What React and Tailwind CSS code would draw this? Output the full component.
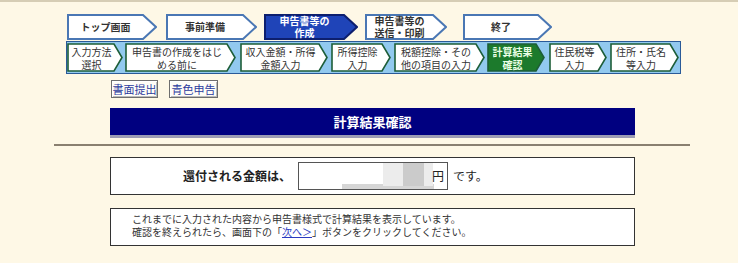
import React from "react";

const topSteps = [
  { lines: ["トップ画面"], w: 90, ml: 0 },
  { lines: ["事前準備"], w: 91, ml: 9 },
  { lines: ["申告書等の", "作成"], w: 94, ml: 7, active: true },
  { lines: ["申告書等の", "送信・印刷"], w: 82, ml: 7 },
  { lines: ["終了"], w: 89, ml: 16 },
];

const subSteps = [
  { lines: ["入力方法", "選択"], w: 56, ml: 0 },
  { lines: ["申告書の作成をはじ", "める前に"], w: 111, ml: 2 },
  { lines: ["収入金額・所得", "金額入力"], w: 88, ml: 4 },
  { lines: ["所得控除", "入力"], w: 60, ml: 3 },
  { lines: ["税額控除・その", "他の項目の入力"], w: 91, ml: 3 },
  { lines: ["計算結果", "確認"], w: 58, ml: 2, active: true },
  { lines: ["住民税等", "入力"], w: 58, ml: 4 },
  { lines: ["住所・氏名", "等入力"], w: 69, ml: 3 },
];

function TopStep({ lines, w, ml, active }) {
  const h = 26;
  const pts = `1,1 ${w - 14},1 ${w - 1},${h / 2} ${w - 14},${h - 1} 1,${h - 1}`;
  return (
    <div className="relative shrink-0" style={{ width: w, height: h, marginLeft: ml }}>
      <svg className="absolute inset-0" width={w} height={h}>
        <polygon
          points={pts}
          fill={active ? "#1f44b8" : "#ffffff"}
          stroke={active ? "#0d1f6e" : "#4a77b4"}
          strokeWidth="2"
        />
      </svg>
      <div
        className={`relative h-full flex flex-col items-center justify-center pr-[13px] text-[10px] leading-[12px] font-bold whitespace-nowrap ${
          active ? "text-white" : "text-[#333]"
        }`}
      >
        {lines.map((l) => (
          <span key={l}>{l}</span>
        ))}
      </div>
    </div>
  );
}

function SubStep({ lines, w, ml, active }) {
  const h = 29;
  const pts = `1,1 ${w - 9},1 ${w - 1},${h / 2} ${w - 9},${h - 1} 1,${h - 1}`;
  return (
    <div className="relative shrink-0" style={{ width: w, height: h, marginLeft: ml }}>
      <svg className="absolute inset-0" width={w} height={h}>
        <polygon
          points={pts}
          fill={active ? "#1c7a2c" : "#ffffff"}
          stroke="#1d5e38"
          strokeWidth="1.6"
        />
      </svg>
      <div
        className={`relative h-full flex flex-col items-center justify-center pr-[7px] text-[10px] leading-[13px] whitespace-nowrap ${
          active ? "text-[#eaffe6] font-bold" : "text-[#333]"
        }`}
      >
        {lines.map((l) => (
          <span key={l}>{l}</span>
        ))}
      </div>
    </div>
  );
}

export default function App() {
  return (
    <div className="w-[738px] h-[263px] overflow-hidden bg-[#fef8e6] border-t-2 border-[#d6cdb5] font-['Noto_Sans_CJK_JP','Liberation_Sans',sans-serif]">
      {/* main steps */}
      <div className="flex pl-[67px] pt-[12px] h-[39px]">
        {topSteps.map((s) => (
          <TopStep key={s.lines.join()} {...s} />
        ))}
      </div>

      {/* sub steps */}
      <div className="ml-[66px] w-[615px] h-[33px] bg-[#92c9ef] border border-[#2a5a98] flex items-center">
        {subSteps.map((s) => (
          <SubStep key={s.lines.join()} {...s} />
        ))}
      </div>

      {/* buttons */}
      <div className="flex ml-[111px] mt-[6px] gap-[11px]">
        <div className="h-[18px] w-[47px] flex items-center justify-center whitespace-nowrap border border-[#6e6e6e] bg-[#fffdf6] shadow-[inset_1px_1px_0_#ffffff,inset_-1px_-1px_0_#bbbbbb] text-[11px] leading-[12px] text-[#2b3b9f]">
          書面提出
        </div>
        <div className="h-[18px] w-[49px] flex items-center justify-center whitespace-nowrap border border-[#6e6e6e] bg-[#fffdf6] shadow-[inset_1px_1px_0_#ffffff,inset_-1px_-1px_0_#bbbbbb] text-[11px] leading-[12px] text-[#2b3b9f]">
          青色申告
        </div>
      </div>

      {/* title */}
      <div className="ml-[110px] mt-[10px] w-[525px] h-[27px] bg-[#000080] shadow-[0_3px_0_#9c9cb4] flex items-center justify-center text-white text-[13px] font-bold">
        計算結果確認
      </div>

      <div className="ml-[54px] mt-[9px] w-[636px] h-[2px] bg-[#8a8070]" />

      {/* refund amount */}
      <div className="ml-[110px] mt-[11px] w-[525px] h-[38px] bg-white border border-[#333] flex items-center">
        <div className="w-[180px] text-right text-[12px] font-bold text-[#222]">還付される金額は、</div>
        <div className="relative ml-[7px] w-[150px] h-[28px] border border-[#555] bg-white flex items-center justify-end pr-[3px] text-[12px] text-[#222]">
          <div className="absolute left-[43px] bottom-0 w-[92px] h-[5px] bg-[#d6d6d6]" />
          <div className="absolute left-[84px] top-0 w-[50px] h-[23px] bg-[#ececec]" />
          <div className="absolute left-[104px] top-0 w-[21px] h-[23px] bg-[#cbcbcb]" />
          <span className="relative">円</span>
        </div>
        <div className="ml-[5px] text-[12px] text-[#222]">です。</div>
      </div>

      {/* note */}
      <div className="ml-[110px] mt-[13px] w-[525px] h-[38px] bg-white border border-[#333] pl-[21px] pt-[3px] text-[10px] leading-[13px] text-[#333]">
        <p>これまでに入力された内容から申告書様式で計算結果を表示しています。</p>
        <p>
          確認を終えられたら、画面下の「<span className="text-[#2b3bc0] underline">次へ＞</span>」ボタンをクリックしてください。
        </p>
      </div>
    </div>
  );
}
